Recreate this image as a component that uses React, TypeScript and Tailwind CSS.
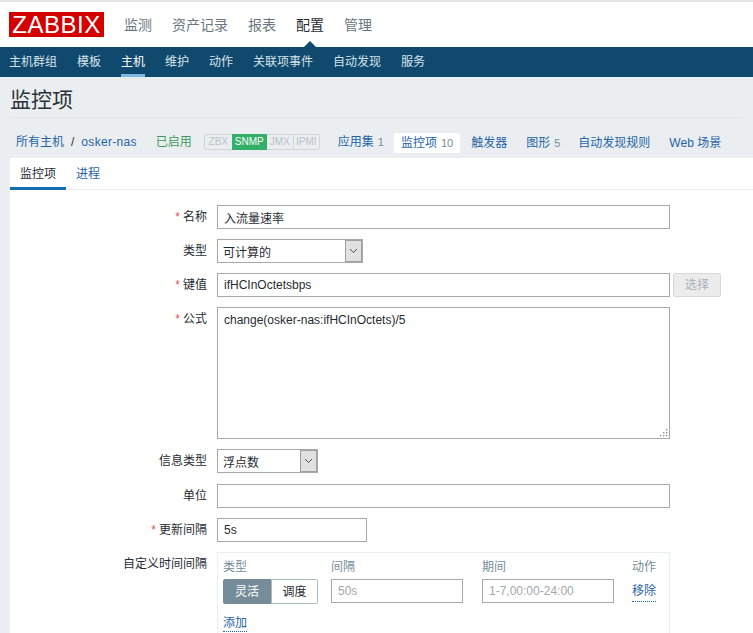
const font = '[font-family:"Liberation_Sans","Noto_Sans_CJK_SC",sans-serif]'

const topMenu = ['监测', '资产记录', '报表', '配置', '管理']
const subMenu = ['主机群组', '模板', '主机', '维护', '动作', '关联项事件', '自动发现', '服务']

function Row({ label, required, children, align = 'items-center', className = '' }: { label: string; required?: boolean; children: React.ReactNode; align?: string; className?: string }) {
  return (
    <div className={`flex shrink-0 gap-[10px] ${align} ${className}`}>
      <div className="w-[197px] text-right text-[12px] leading-[24px] text-[#1f2c33]">
        {required && <span className="text-[#d9534f] mr-[3px]">*</span>}
        {label}
      </div>
      {children}
    </div>
  )
}

function TextInput({ value, className = '' }: { value?: string; className?: string }) {
  return (
    <input
      readOnly
      value={value ?? ''}
      className={`h-[24px] border border-[#a9a9a9] bg-white px-[6px] text-[12px] text-[#1f2c33] outline-none ${className}`}
    />
  )
}

function FakeSelect({ value, width }: { value: string; width: string }) {
  return (
    <div className={`flex h-[24px] items-center justify-between border border-[#a9a9a9] bg-white ${width}`}>
      <span className="pl-[5px] pt-[3px] text-[12px] text-[#1f2c33]">{value}</span>
      <span className="flex h-[22px] w-[17px] items-center justify-center border border-[#a0a0a0] bg-[#e1e1e1]">
        <svg width="9" height="6" viewBox="0 0 9 6" fill="none">
          <path d="M1 1l3.5 3.5L8 1" stroke="#4d4d4d" strokeWidth="1" />
        </svg>
      </span>
    </div>
  )
}

function Link({ children, count, boxed }: { children: React.ReactNode; count?: number; boxed?: boolean }) {
  return (
    <span className={`whitespace-nowrap text-[12px] text-[#1f65a6] ${boxed ? 'rounded-[2px] bg-white px-[7px] py-[3px]' : ''}`}>
      {children}
      {count !== undefined && <span className="ml-[4px] text-[11px] text-[#768d99]">{count}</span>}
    </span>
  )
}

export default function App() {
  return (
    <div className={`flex h-[633px] w-[753px] flex-col overflow-hidden bg-[#ebeef0] ${font}`}>
      {/* top menu */}
      <div className="flex h-[47px] shrink-0 items-center border-t-2 border-[#e4e4e4] bg-white pl-[9px]">
        <div className="flex h-[25px] w-[95px] items-center justify-center bg-[#d40000] text-[24px] leading-none tracking-[0.5px] text-white">
          ZABBIX
        </div>
        <div className="ml-[20px] flex gap-[20px] pt-[1px]">
          {topMenu.map((m) => (
            <span key={m} className={`relative text-[14px] ${m === '配置' ? 'text-[#1f2c33]' : 'text-[#6b7780]'}`}>
              {m}
              {m === '配置' && (
                <span className="absolute left-1/2 top-[26px] -ml-[6px] border-x-[6px] border-b-[6px] border-x-transparent border-b-[#0f4a6e]" />
              )}
            </span>
          ))}
        </div>
      </div>

      {/* sub menu */}
      <div className="flex h-[30px] shrink-0 gap-[20px] bg-[#0f4a6e] pl-[9px]">
        {subMenu.map((m) => (
          <span
            key={m}
            className={`h-[30px] pt-[7px] text-[12px] leading-[16px] text-[#d6e2ea] ${m === '主机' ? 'border-b-[3px] border-[#7fb8e4] text-white' : ''}`}
          >
            {m}
          </span>
        ))}
      </div>

      {/* title */}
      <div className="mx-[10px] flex h-[41px] shrink-0 items-center border-b border-[#e2e5e8] pt-[5px] text-[21px] text-[#2b3338]">
        监控项
      </div>

      {/* host nav */}
      <div className="flex h-[40px] shrink-0 items-center pl-[16px] pt-[8px]">
        <span className="text-[12px] text-[#1f65a6]">所有主机</span>
        <span className="mx-[7px] text-[12px] text-[#1f2c33]">/</span>
        <span className="text-[12px] tracking-[0.3px] text-[#1f65a6]">osker-nas</span>
        <span className="ml-[19px] text-[12px] text-[#3c9a5f]">已启用</span>
        <div className="ml-[12px] flex h-[16px] items-center rounded-[2px] border border-[#d0d5d8] text-[10px] leading-none text-[#b9c2c7]">
          <span className="flex h-full w-[27px] items-center justify-center">ZBX</span>
          <span className="flex h-[16px] w-[35px] items-center justify-center bg-[#34af67] text-white">SNMP</span>
          <span className="flex h-full w-[27px] items-center justify-center border-r border-[#d0d5d8]">JMX</span>
          <span className="flex h-full w-[25px] items-center justify-center">IPMI</span>
        </div>
        <div className="ml-[18px] flex items-center">
          <Link count={1}>应用集</Link>
          <span className="ml-[10px]">
            <Link boxed count={10}>监控项</Link>
          </span>
          <span className="ml-[11px]"><Link>触发器</Link></span>
          <span className="ml-[19px]"><Link count={5}>图形</Link></span>
          <span className="ml-[18px]"><Link>自动发现规则</Link></span>
          <span className="ml-[19px]"><Link>Web 场景</Link></span>
        </div>
      </div>

      {/* card */}
      <div className="ml-[10px] min-h-0 flex-1 bg-white">
        <div className="flex h-[32px] border-b border-[#ebeef0]">
          <span className="h-[32px] w-[56px] border-b-[3px] border-[#0f6fb0] pt-[8px] text-center text-[12px] leading-[16px] text-[#1f2c33]">
            监控项
          </span>
          <span className="ml-[10px] pt-[8px] text-[12px] leading-[16px] text-[#1f65a6]">进程</span>
        </div>

        <div className="flex flex-col gap-[10px] pt-[15px]">
          <Row label="名称" required>
            <TextInput value="入流量速率" className="w-[453px]" />
          </Row>
          <Row label="类型">
            <FakeSelect value="可计算的" width="w-[146px]" />
          </Row>
          <Row label="键值" required>
            <TextInput value="ifHCInOctetsbps" className="w-[453px]" />
            <button className="-ml-[7px] h-[24px] w-[48px] rounded-[2px] border border-[#d8d8d8] bg-[#ececec] text-[12px] text-[#a9b1b5]">
              选择
            </button>
          </Row>
          <Row label="公式" required align="items-start">
            <div className="relative h-[132px] w-[453px]">
              <textarea
                readOnly
                value="change(osker-nas:ifHCInOctets)/5"
                className="h-full w-full resize-none border border-[#a9a9a9] bg-white px-[6px] py-[3px] text-[12px] text-[#1f2c33] outline-none"
              />
              <svg className="absolute bottom-[2px] right-[2px]" width="9" height="9" viewBox="0 0 9 9" fill="#8f8f8f">
                <rect x="7" y="1" width="1.4" height="1.4" />
                <rect x="4" y="4" width="1.4" height="1.4" />
                <rect x="7" y="4" width="1.4" height="1.4" />
                <rect x="1" y="7" width="1.4" height="1.4" />
                <rect x="4" y="7" width="1.4" height="1.4" />
                <rect x="7" y="7" width="1.4" height="1.4" />
              </svg>
            </div>
          </Row>
          <Row label="信息类型">
            <FakeSelect value="浮点数" width="w-[101px]" />
          </Row>
          <Row label="单位" className="mt-[1px]">
            <TextInput className="w-[453px]" />
          </Row>
          <Row label="更新间隔" required>
            <TextInput value="5s" className="w-[150px]" />
          </Row>
          <Row label="自定义时间间隔" align="items-start">
            <div className="h-[120px] w-[453px] border border-[#ebeef0] px-[5px] pt-[5px]">
              <div className="grid grid-cols-[108px_151px_150px_24px] text-[12px]">
                <span className="leading-[18px] text-[#768d99]">类型</span>
                <span className="leading-[18px] text-[#768d99]">间隔</span>
                <span className="leading-[18px] text-[#768d99]">期间</span>
                <span className="leading-[18px] text-[#768d99]">动作</span>
                <div className="mt-[3px] flex h-[25px] w-[95px]">
                  <span className="flex w-[48px] items-center justify-center rounded-l-[2px] bg-[#768d99] text-white">灵活</span>
                  <span className="flex w-[47px] items-center justify-center rounded-r-[2px] border border-[#acbbc2] text-[#1f2c33]">调度</span>
                </div>
                <div className="mt-[3px]">
                  <input readOnly placeholder="50s" className="h-[24px] w-[132px] border border-[#a9a9a9] px-[6px] outline-none placeholder:text-[#a0a8ac]" />
                </div>
                <div className="mt-[3px]">
                  <input readOnly placeholder="1-7,00:00-24:00" className="h-[24px] w-[132px] border border-[#a9a9a9] px-[6px] outline-none placeholder:text-[#a0a8ac]" />
                </div>
                <span className="mt-[3px] h-[20px] self-center border-b border-dotted border-[#1f65a6] leading-[18px] text-[#1f65a6]">移除</span>
              </div>
              <span className="mt-[11px] inline-block border-b border-dotted border-[#1f65a6] text-[12px] leading-[16px] text-[#1f65a6]">添加</span>
            </div>
          </Row>
        </div>
      </div>
    </div>
  )
}
